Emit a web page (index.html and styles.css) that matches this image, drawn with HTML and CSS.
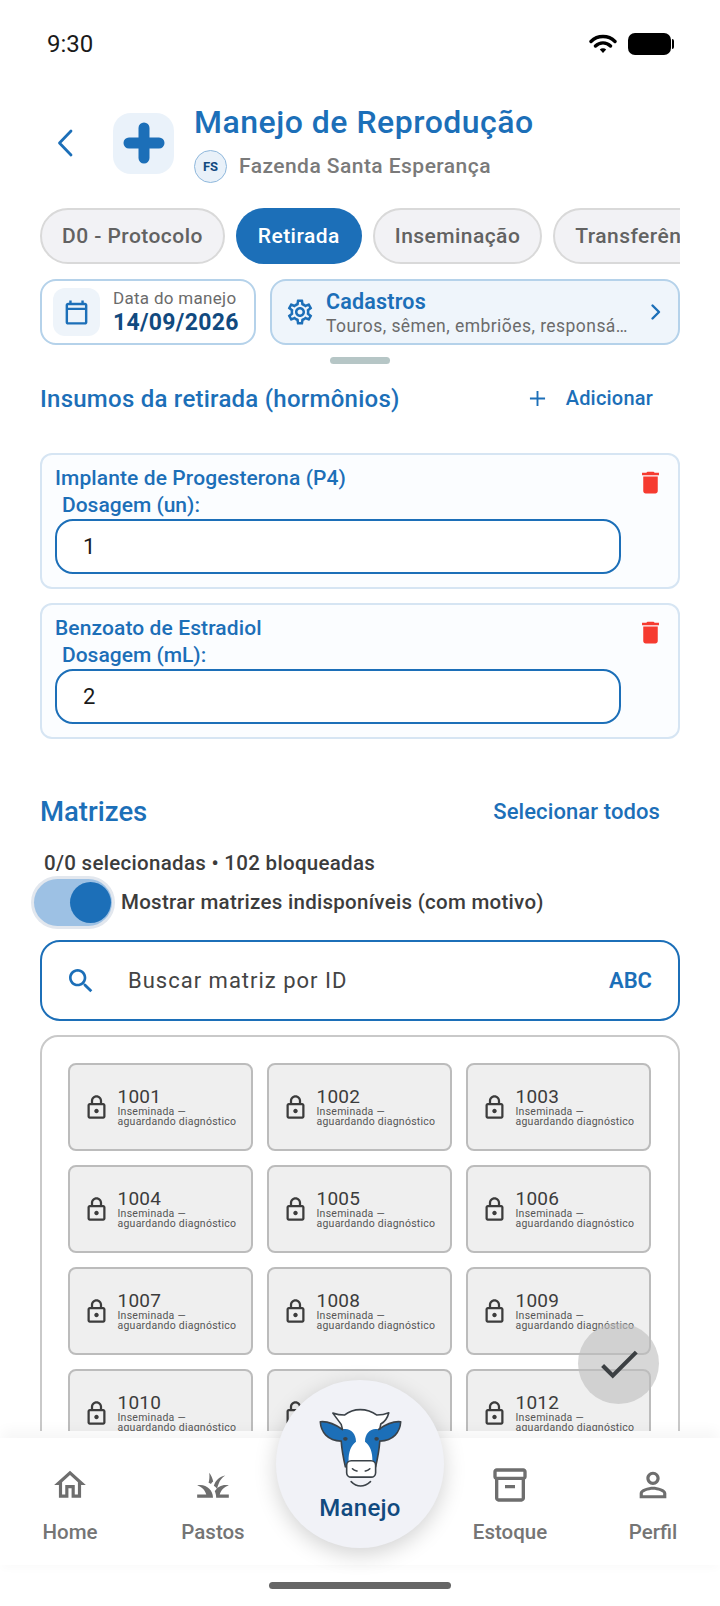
FILE: index.html
```html
<!DOCTYPE html>
<html lang="pt-BR">
  <head>
    <meta charset="UTF-8" />
    <meta name="viewport" content="width=device-width, initial-scale=1.0" />
    <title>Manejo de Reprodução</title>
    <link rel="stylesheet" href="styles.css">
  </head>
  <body>
    <div class="screen">
      <div class="status-bar">
        <span class="time">9:30</span>
        <div class="status-icons">
          <svg class="wifi" viewBox="0 0 28 20"><path d="M2 7.500a17 17 0 0 1 24 0M6.500 12a10.600 10.600 0 0 1 15 0" fill="none" stroke="#000" stroke-width="3.400" stroke-linecap="round"/><path d="M10.800 15.600a4.600 4.600 0 0 1 6.400 0L14 19z" fill="#000"/></svg>
          <div class="battery"></div>
        </div>
      </div>

      <div class="content">
        <div class="header">
          <svg class="back" viewBox="0 0 16 28"><path d="M14 2 2.500 14 14 26" fill="none" stroke="#1c6fb8" stroke-width="2.800" stroke-linecap="round" stroke-linejoin="round"/></svg>
          <div class="header-tile">
            <svg viewBox="0 0 42 42" class="plus"><path d="M21 6v30M6 21h30" fill="none" stroke="#1c6fb8" stroke-width="11" stroke-linecap="round"/></svg>
          </div>
          <div class="header-text">
            <h1>Manejo de Reprodução</h1>
            <div class="farm">
              <span class="farm-badge">FS</span>
              <span class="farm-name">Fazenda Santa Esperança</span>
            </div>
          </div>
        </div>

        <div class="chips">
          <span class="chip">D0 - Protocolo</span>
          <span class="chip active">Retirada</span>
          <span class="chip">Inseminação</span>
          <span class="chip">Transferência</span>
        </div>

        <div class="info-row">
          <div class="date-card">
            <div class="date-tile">
              <svg viewBox="0 0 24 24"><path d="M19 4h-1V2h-2v2H8V2H6v2H5c-1.100 0-2 .9-2 2v14c0 1.100.9 2 2 2h14c1.100 0 2-.9 2-2V6c0-1.100-.9-2-2-2zm0 16H5V10h14v10zm0-12H5V6h14v2z"/></svg>
            </div>
            <div>
              <div class="date-label">Data do manejo</div>
              <div class="date-value">14/09/2026</div>
            </div>
          </div>
          <div class="cad-card">
            <svg class="gear" viewBox="0 0 24 24"><path d="M19.430 12.980c.04-.32.07-.64.07-.98 0-.34-.03-.66-.07-.98l2.110-1.650c.19-.15.24-.42.12-.64l-2-3.460c-.09-.16-.26-.25-.44-.25-.06 0-.12.01-.17.03l-2.490 1c-.52-.4-1.080-.73-1.690-.98l-.38-2.650C14.460 2.180 14.250 2 14 2h-4c-.25 0-.46.18-.49.42l-.38 2.650c-.61.25-1.170.59-1.690.98l-2.490-1c-.06-.02-.12-.03-.18-.03-.17 0-.34.09-.43.25l-2 3.460c-.13.22-.07.49.12.64l2.110 1.650c-.04.32-.07.65-.07.98 0 .33.03.66.07.98l-2.110 1.650c-.19.15-.24.42-.12.64l2 3.460c.09.16.26.25.44.25.06 0 .12-.01.17-.03l2.490-1c.52.4 1.080.73 1.690.98l.38 2.650c.03.24.24.42.49.42h4c.25 0 .46-.18.49-.42l.38-2.650c.61-.25 1.170-.59 1.690-.98l2.490 1c.06.02.12.03.18.03.17 0 .34-.09.43-.25l2-3.460c.12-.22.07-.49-.12-.64l-2.110-1.650zm-1.980-1.710c.04.31.05.52.05.73 0 .21-.02.43-.05.73l-.14 1.130.89.7 1.080.84-.7 1.210-1.270-.51-1.040-.42-.9.68c-.43.32-.84.56-1.250.73l-1.060.43-.16 1.130-.2 1.350h-1.400l-.19-1.350-.16-1.130-1.060-.43c-.43-.18-.83-.41-1.230-.71l-.91-.7-1.060.43-1.270.51-.7-1.210 1.080-.84.89-.7-.14-1.130c-.03-.31-.05-.54-.05-.74s.02-.43.05-.73l.14-1.130-.89-.7-1.080-.84.7-1.210 1.270.51 1.040.42.9-.68c.43-.32.84-.56 1.250-.73l1.060-.43.16-1.130.2-1.350h1.390l.19 1.350.16 1.130 1.060.43c.43.18.83.41 1.230.71l.91.7 1.060-.43 1.270-.51.7 1.210-1.070.85-.89.7.14 1.130zM12 8c-2.210 0-4 1.790-4 4s1.790 4 4 4 4-1.790 4-4-1.790-4-4-4zm0 6c-1.100 0-2-.9-2-2s.9-2 2-2 2 .9 2 2-.9 2-2 2z"/></svg>
            <div class="cad-text">
              <div class="cad-title">Cadastros</div>
              <div class="cad-sub">Touros, sêmen, embriões, responsáveis</div>
            </div>
            <svg class="cad-arrow" viewBox="0 0 12 18"><path d="M2.500 2.500 9 9l-6.500 6.500" fill="none" stroke="#1c6fb8" stroke-width="2.400" stroke-linecap="round" stroke-linejoin="round"/></svg>
          </div>
        </div>

        <div class="handle"></div>

        <div class="section-head insumos-head">
          <h2 class="section-title">Insumos da retirada (hormônios)</h2>
          <div class="add-btn">
            <svg viewBox="0 0 18 18"><path d="M9 1v16M1 9h16" fill="none" stroke="#1c6fb8" stroke-width="2"/></svg>
            <span>Adicionar</span>
          </div>
        </div>

        <div class="dose-card first">
          <div class="dose-body">
            <div class="dose-name">Implante de Progesterona (P4)</div>
            <label class="dose-label">Dosagem (un):</label>
            <div class="dose-input">1</div>
          </div>
          <svg class="trash" viewBox="0 0 24 24"><path d="M6 19c0 1.100.9 2 2 2h8c1.100 0 2-.9 2-2V7H6v12zM19 4h-3.500l-1-1h-5l-1 1H5v2h14V4z"/></svg>
        </div>

        <div class="dose-card">
          <div class="dose-body">
            <div class="dose-name">Benzoato de Estradiol</div>
            <label class="dose-label">Dosagem (mL):</label>
            <div class="dose-input">2</div>
          </div>
          <svg class="trash" viewBox="0 0 24 24"><path d="M6 19c0 1.100.9 2 2 2h8c1.100 0 2-.9 2-2V7H6v12zM19 4h-3.500l-1-1h-5l-1 1H5v2h14V4z"/></svg>
        </div>

        <div class="section-head matrizes-head">
          <h2 class="matrizes-title">Matrizes</h2>
          <span class="select-all">Selecionar todos</span>
        </div>

        <div class="count">0/0 selecionadas • 102 bloqueadas</div>

        <div class="toggle-row">
          <div class="switch"><div class="knob"></div></div>
          <span class="toggle-text">Mostrar matrizes indisponíveis (com motivo)</span>
        </div>

        <div class="search">
          <svg viewBox="0 0 24 24"><path d="M15.500 14h-.79l-.28-.27C15.410 12.590 16 11.110 16 9.500 16 5.910 13.090 3 9.500 3S3 5.910 3 9.500 5.910 16 9.500 16c1.610 0 3.090-.59 4.230-1.570l.27.28v.79l5 4.990L20.490 19l-4.990-5zm-6 0C7.010 14 5 11.990 5 9.500S7.010 5 9.500 5 14 7.010 14 9.500 11.990 14 9.500 14z"/></svg>
          <span class="search-text">Buscar matriz por ID</span>
          <span class="search-mode">ABC</span>
        </div>

        <div class="matrix-list">
          <div class="matrix-grid">
            <div class="tile"><svg viewBox="0 0 24 24"><use href="#lock"/></svg><div><div class="tile-id">1001</div><div class="tile-sub">Inseminada —<br>aguardando diagnóstico</div></div></div>
            <div class="tile"><svg viewBox="0 0 24 24"><use href="#lock"/></svg><div><div class="tile-id">1002</div><div class="tile-sub">Inseminada —<br>aguardando diagnóstico</div></div></div>
            <div class="tile"><svg viewBox="0 0 24 24"><use href="#lock"/></svg><div><div class="tile-id">1003</div><div class="tile-sub">Inseminada —<br>aguardando diagnóstico</div></div></div>
            <div class="tile"><svg viewBox="0 0 24 24"><use href="#lock"/></svg><div><div class="tile-id">1004</div><div class="tile-sub">Inseminada —<br>aguardando diagnóstico</div></div></div>
            <div class="tile"><svg viewBox="0 0 24 24"><use href="#lock"/></svg><div><div class="tile-id">1005</div><div class="tile-sub">Inseminada —<br>aguardando diagnóstico</div></div></div>
            <div class="tile"><svg viewBox="0 0 24 24"><use href="#lock"/></svg><div><div class="tile-id">1006</div><div class="tile-sub">Inseminada —<br>aguardando diagnóstico</div></div></div>
            <div class="tile"><svg viewBox="0 0 24 24"><use href="#lock"/></svg><div><div class="tile-id">1007</div><div class="tile-sub">Inseminada —<br>aguardando diagnóstico</div></div></div>
            <div class="tile"><svg viewBox="0 0 24 24"><use href="#lock"/></svg><div><div class="tile-id">1008</div><div class="tile-sub">Inseminada —<br>aguardando diagnóstico</div></div></div>
            <div class="tile"><svg viewBox="0 0 24 24"><use href="#lock"/></svg><div><div class="tile-id">1009</div><div class="tile-sub">Inseminada —<br>aguardando diagnóstico</div></div></div>
            <div class="tile"><svg viewBox="0 0 24 24"><use href="#lock"/></svg><div><div class="tile-id">1010</div><div class="tile-sub">Inseminada —<br>aguardando diagnóstico</div></div></div>
            <div class="tile"><svg viewBox="0 0 24 24"><use href="#lock"/></svg><div><div class="tile-id">1011</div><div class="tile-sub">Inseminada —<br>aguardando diagnóstico</div></div></div>
            <div class="tile"><svg viewBox="0 0 24 24"><use href="#lock"/></svg><div><div class="tile-id">1012</div><div class="tile-sub">Inseminada —<br>aguardando diagnóstico</div></div></div>
          </div>
        </div>
      </div>

      <div class="fab">
        <svg viewBox="0 0 24 24"><path d="M9 16.170 4.830 12l-1.420 1.410L9 19 21 7l-1.410-1.410z"/></svg>
      </div>

      <div class="nav">
        <div class="nav-item">
          <div class="nav-icon"><svg class="ic38" viewBox="0 0 24 24"><path d="M12 5.690l5 4.500V18h-2v-6H9v6H7v-7.810l5-4.500M12 3L2 12h3v8h6v-6h2v6h6v-8h3L12 3z"/></svg></div>
          <span>Home</span>
        </div>
        <div class="nav-item">
          <div class="nav-icon"><svg class="ic38" viewBox="0 0 24 24"><path d="M12 20H2v-2h5.750C7.020 15.190 4.810 12.990 2 12.260 2.640 12.100 3.310 12 4 12c4.420 0 8 3.580 8 8zM22 12.260C21.360 12.100 20.690 12 20 12c-2.930 0-5.480 1.580-6.880 3.930.29.66.53 1.350.67 2.070.13.65.2 1.320.2 2h8v-2h-5.750c.74-2.810 2.950-5.010 5.760-5.740zM15.640 11.020c.78-2.090 2.230-3.840 4.090-5-3.500.6-6.300 3.200-7.200 6.500.7.500 1.400 1.100 2 1.800.3-1.100.7-2.300 1.110-3.300zM12.100 9.800C11.800 7.900 10.900 5.700 9.600 4.200c.3 2.200.2 4.300-.4 6.400.5.200 1 .4 1.500.7.400-.6.900-1.100 1.400-1.500z"/></svg></div>
          <span>Pastos</span>
        </div>
        <div></div>
        <div class="nav-item">
          <div class="nav-icon"><svg class="ic40" viewBox="0 0 24 24"><path d="M20 2H4c-1 0-2 .9-2 2v3.010c0 .72.43 1.340 1 1.690V20c0 1.100 1.100 2 2 2h14c.9 0 2-.9 2-2V8.700c.57-.35 1-.97 1-1.690V4c0-1.100-1-2-2-2zm-1 18H5V9h14v11zm1-13H4V4h16v3zM9 12h6v2H9z"/></svg></div>
          <span>Estoque</span>
        </div>
        <div class="nav-item">
          <div class="nav-icon"><svg class="ic40" viewBox="0 0 24 24"><path d="M12 5.900c1.160 0 2.100.94 2.100 2.100s-.94 2.100-2.100 2.100S9.900 9.160 9.900 8s.94-2.100 2.100-2.100m0 9c2.970 0 6.100 1.460 6.100 2.100v1.100H5.900V17c0-.64 3.130-2.100 6.100-2.100M12 4C9.790 4 8 5.790 8 8s1.790 4 4 4 4-1.790 4-4-1.790-4-4-4zm0 9c-2.670 0-8 1.340-8 4v3h16v-3c0-2.660-5.330-4-8-4z"/></svg></div>
          <span>Perfil</span>
        </div>
      </div>

      <div class="manejo-btn">
        <svg class="cow" viewBox="80 104 264 258">
          <path d="M152 158 126 123c12 4 24 6 36 6 14-11 30-17 49-17 21 0 37 6 52 17 12 0 25-2 37-7-4 16-12 28-25 35l-1 42-14 82H166l-14-82z" fill="#fff"/>
          <path d="M156 174C128 154 105 148 87 150c2 32 22 58 65 60 2 28 7 54 13 80l10-16c-1-32 8-50 23-62 0-28-20-44-42-38z" fill="#1c6fb8"/>
          <path d="M268 174c28-20 51-26 69-24-2 32-22 58-65 60-2 28-7 54-13 80l-10-16c1-32-8-50-23-62 0-28 20-44 42-38z" fill="#1c6fb8"/>
          <g fill="none" stroke="#3b4248" stroke-width="5" stroke-linejoin="round" stroke-linecap="round">
            <path d="M156 174C128 154 105 148 87 150c2 32 22 58 65 60 2 28 7 54 13 80"/>
            <path d="M268 174c28-20 51-26 69-24-2 32-22 58-65 60-2 28-7 54-13 80"/>
            <path d="M156 174l-4-16-26-35c12 4 24 6 36 6 14-11 30-17 49-17 21 0 37 6 52 17 12 0 25-2 37-7-4 16-12 28-25 35l-3 16"/>
          </g>
          <ellipse cx="165" cy="203" rx="7" ry="6" fill="#3b4248"/>
          <ellipse cx="262" cy="203" rx="7" ry="6" fill="#3b4248"/>
          <rect x="169" y="271" width="90" height="51" rx="14" fill="#fff" stroke="#3b4248" stroke-width="5"/>
          <path d="M187 296c5 5 10 6 14 7M241 296c-5 5-10 6-14 7M183 336c18 18 40 18 60 0" fill="none" stroke="#3b4248" stroke-width="5" stroke-linecap="round"/>
        </svg>
        <span>Manejo</span>
      </div>

      <div class="home-bar"></div>
    </div>

    <svg class="defs" width="0" height="0">
      <symbol id="lock" viewBox="0 0 24 24"><path d="M18 8h-1V6c0-2.760-2.240-5-5-5S7 3.240 7 6v2H6c-1.100 0-2 .9-2 2v10c0 1.100.9 2 2 2h12c1.100 0 2-.9 2-2V10c0-1.100-.9-2-2-2zM9 6c0-1.660 1.340-3 3-3s3 1.340 3 3v2H9V6zm9 14H6V10h12v10zm-6-3c1.100 0 2-.9 2-2s-.9-2-2-2-2 .9-2 2 .9 2 2 2z"/></symbol>
    </svg>
  </body>
</html>
```
FILE: styles.css
```css
body {
  margin: 0;
  background-color: #ffffff;
  font-family: Roboto, "Noto Sans", sans-serif;
}
.screen {
  position: relative;
  display: flex;
  flex-direction: column;
  width: 720px;
  height: 1606px;
  overflow: hidden;
  background-color: #ffffff;
}
.defs {
  position: absolute;
}

/* status bar */
.status-bar {
  display: flex;
  justify-content: space-between;
  align-items: flex-start;
  height: 100px;
  padding: 30px 47px 0 47px;
  box-sizing: border-box;
  flex-shrink: 0;
}
.time {
  font-size: 24px;
  line-height: 28px;
  color: #1a1a1a;
}
.status-icons {
  display: flex;
  align-items: center;
  gap: 11px;
  margin-top: 3px;
}
.wifi {
  width: 28px;
  height: 20px;
}
.battery {
  position: relative;
  width: 43px;
  height: 22px;
  margin-right: 2px;
  background-color: #000000;
  border-radius: 7px;
}
.battery::after {
  content: "";
  position: absolute;
  right: -3px;
  top: 6px;
  width: 2px;
  height: 10px;
  background-color: #000000;
  border-radius: 0 2px 2px 0;
}

/* scrolling part */
.content {
  flex: 1;
  min-height: 0;
  overflow: hidden;
  padding: 0 40px;
}
.header {
  display: flex;
  align-items: center;
  height: 86px;
  margin-bottom: 22px;
}
.back {
  width: 16px;
  height: 28px;
  margin-left: 17px;
}
.header-tile {
  display: flex;
  justify-content: center;
  align-items: center;
  width: 61px;
  height: 61px;
  margin-left: 40px;
  background-color: #eaf2fa;
  border-radius: 18px;
}
.plus {
  width: 42px;
  height: 42px;
}
.header-text {
  margin-left: 20px;
}
h1 {
  margin: 0;
  height: 46px;
  font-size: 32px;
  line-height: 36px;
  font-weight: 500;
  letter-spacing: 0.5px;
  color: #1c6fb8;
}
.farm {
  display: flex;
  align-items: center;
  gap: 12px;
}
.farm-badge {
  display: flex;
  justify-content: center;
  align-items: center;
  width: 33px;
  height: 33px;
  box-sizing: border-box;
  background-color: #e9f1f9;
  border: 1.500px solid #8fb8dc;
  border-radius: 50%;
  font-size: 13px;
  font-weight: 700;
  color: #114a7f;
}
.farm-name {
  font-size: 21px;
  font-weight: 500;
  letter-spacing: 0.45px;
  color: #7a7a7a;
}

/* tabs */
.chips {
  display: flex;
  gap: 11px;
  overflow: hidden;
  height: 56px;
}
.chip {
  display: flex;
  align-items: center;
  flex-shrink: 0;
  height: 56px;
  box-sizing: border-box;
  padding: 0 20px;
  background-color: #f2f2f5;
  border: 2px solid #d9d9d9;
  border-radius: 28px;
  font-size: 21px;
  font-weight: 500;
  letter-spacing: 0.45px;
  color: #626262;
}
.chip.active {
  padding: 0 22px;
  background-color: #1c6fb8;
  border: none;
  color: #ffffff;
}

/* date + cadastros */
.info-row {
  display: flex;
  gap: 14px;
  margin-top: 15px;
}
.date-card {
  display: flex;
  align-items: center;
  gap: 13px;
  width: 216px;
  height: 66px;
  box-sizing: border-box;
  padding-left: 11px;
  background-color: #ffffff;
  border: 2px solid #b5d2ea;
  border-radius: 16px;
}
.date-tile {
  display: flex;
  justify-content: center;
  align-items: center;
  width: 47px;
  height: 48px;
  background-color: #eef4fa;
  border-radius: 12px;
}
.date-tile svg {
  width: 29px;
  height: 29px;
  fill: #1c6fb8;
}
.date-label {
  font-size: 17px;
  line-height: 22px;
  letter-spacing: 0.3px;
  color: #6b6b6b;
}
.date-value {
  font-size: 23px;
  line-height: 28px;
  font-weight: 700;
  letter-spacing: 0.3px;
  color: #114a7f;
}
.cad-card {
  display: flex;
  align-items: center;
  flex: 1;
  min-width: 0;
  height: 66px;
  box-sizing: border-box;
  padding: 0 16px 0 13px;
  background-color: #eff5fb;
  border: 2px solid #b5d2ea;
  border-radius: 16px;
}
.gear {
  width: 30px;
  height: 30px;
  flex-shrink: 0;
  fill: #1c6fb8;
}
.cad-text {
  flex: 1;
  min-width: 0;
  margin-left: 11px;
  padding-top: 2px;
}
.cad-title {
  font-size: 21.500px;
  line-height: 26px;
  font-weight: 600;
  letter-spacing: 0.2px;
  color: #1c6fb8;
}
.cad-sub {
  font-size: 17.500px;
  line-height: 22px;
  letter-spacing: 0.45px;
  color: #6b6b6b;
  white-space: nowrap;
  overflow: hidden;
  text-overflow: ellipsis;
}
.cad-arrow {
  width: 12px;
  height: 18px;
  flex-shrink: 0;
  margin-left: 14px;
}
.handle {
  width: 60px;
  height: 7px;
  margin: 12px auto 0;
  background-color: #b6c6c6;
  border-radius: 4px;
}

/* insumos */
.section-head {
  display: flex;
  justify-content: space-between;
  align-items: center;
  height: 40px;
}
.insumos-head {
  margin-top: 14px;
}
.section-title {
  margin: 0;
  padding-top: 2px;
  font-size: 24px;
  font-weight: 500;
  letter-spacing: 0.25px;
  color: #1c6fb8;
}
.add-btn {
  display: flex;
  align-items: center;
  gap: 20px;
  padding-right: 27px;
  font-size: 20px;
  font-weight: 500;
  letter-spacing: 0.2px;
  color: #1c6fb8;
}
.add-btn svg {
  width: 17px;
  height: 17px;
}
.dose-card {
  display: flex;
  align-items: flex-start;
  height: 136px;
  box-sizing: border-box;
  margin-top: 14px;
  padding: 10px 13px 0 13px;
  background-color: #fbfdff;
  border: 2px solid #d6e5f3;
  border-radius: 12px;
}
.dose-card.first {
  margin-top: 35px;
}
.dose-body {
  width: 566px;
}
.dose-name {
  font-size: 21px;
  line-height: 26px;
  font-weight: 500;
  letter-spacing: 0.1px;
  color: #1c6fb8;
}
.dose-label {
  display: block;
  margin: 1px 0 1px 7px;
  font-size: 21px;
  line-height: 26px;
  font-weight: 500;
  color: #1c6fb8;
}
.dose-input {
  display: flex;
  align-items: center;
  height: 55px;
  box-sizing: border-box;
  padding-left: 26px;
  background-color: #ffffff;
  border: 2px solid #1c6fb8;
  border-radius: 18px;
  font-size: 22px;
  color: #1a1a1a;
}
.trash {
  width: 29px;
  height: 29px;
  margin: 3px 0 0 15px;
  fill: #f63b30;
}

/* matrizes */
.matrizes-head {
  margin-top: 52px;
}
.matrizes-title {
  margin: 0;
  font-size: 27.500px;
  font-weight: 500;
  color: #1c6fb8;
}
.select-all {
  padding-right: 20px;
  font-size: 22px;
  font-weight: 500;
  letter-spacing: 0.1px;
  color: #1c6fb8;
}
.count {
  margin: 20px 0 0 4px;
  font-size: 20.500px;
  line-height: 24px;
  font-weight: 500;
  letter-spacing: 0.3px;
  color: #3c3c3c;
}
.toggle-row {
  display: flex;
  align-items: center;
  gap: 9px;
  height: 48px;
  margin: 3px 0 0 -6px;
}
.switch {
  display: flex;
  justify-content: flex-end;
  align-items: center;
  width: 78px;
  height: 47px;
  box-sizing: border-box;
  padding-right: 1px;
  background-color: #9dc1e4;
  border-radius: 24px;
  box-shadow: 0 0 0 3px #e2e7ee;
}
.knob {
  width: 41px;
  height: 41px;
  background-color: #1c6fb8;
  border-radius: 50%;
}
.toggle-text {
  font-size: 20.500px;
  font-weight: 500;
  letter-spacing: 0.28px;
  color: #3c3c3c;
}
.search {
  display: flex;
  align-items: center;
  height: 81px;
  box-sizing: border-box;
  margin-top: 14px;
  padding: 0 26px 0 23px;
  background-color: #ffffff;
  border: 2px solid #1c6fb8;
  border-radius: 20px;
}
.search svg {
  width: 32px;
  height: 32px;
  fill: #1c6fb8;
}
.search-text {
  flex: 1;
  margin-left: 31px;
  font-size: 22px;
  letter-spacing: 1px;
  color: #444444;
}
.search-mode {
  font-size: 22px;
  font-weight: 600;
  color: #1c6fb8;
}
.matrix-list {
  margin-top: 14px;
  padding: 26px 27px 40px 26px;
  border: 2px solid #c9c9c9;
  border-radius: 18px;
}
.matrix-grid {
  display: grid;
  grid-template-columns: repeat(3, 185px);
  gap: 14px 14px;
}
.tile {
  display: flex;
  align-items: center;
  gap: 7.500px;
  height: 88px;
  box-sizing: border-box;
  padding-left: 13px;
  background-color: #efefef;
  border: 2px solid #bcbcbc;
  border-radius: 8px;
}
.tile svg {
  width: 27px;
  height: 27px;
  flex-shrink: 0;
  fill: #3c3c3c;
}
.tile-id {
  font-size: 19px;
  line-height: 20px;
  letter-spacing: 0.2px;
  color: #3c3c3c;
}
.tile-sub {
  font-size: 10.500px;
  line-height: 10px;
  letter-spacing: 0.25px;
  color: #555555;
}

/* overlays */
.fab {
  position: absolute;
  left: 578px;
  top: 1323px;
  display: flex;
  justify-content: center;
  align-items: center;
  width: 81px;
  height: 81px;
  background-color: rgba(190, 190, 190, 0.62);
  border-radius: 50%;
}
.fab svg {
  width: 50px;
  height: 50px;
  fill: #3c4043;
}
.nav {
  display: grid;
  grid-template-columns: 140px 146px 148px 152px 134px;
  height: 127px;
  box-sizing: border-box;
  padding-top: 28px;
  flex-shrink: 0;
  margin: 7px 0 41px;
  background-color: #ffffff;
  box-shadow: 0 -10px 12px -2px rgba(0, 0, 0, 0.035), 0 6px 8px -2px rgba(0, 0, 0, 0.02);
}
.nav-item {
  display: flex;
  flex-direction: column;
  align-items: center;
  font-size: 20.500px;
  line-height: 28px;
  font-weight: 500;
  color: #757575;
}
.nav-icon {
  display: flex;
  justify-content: center;
  align-items: center;
  height: 38px;
  margin-bottom: 14px;
}
.ic38 {
  width: 38px;
  height: 38px;
  fill: #6e6e6e;
}
.ic40 {
  width: 40px;
  height: 40px;
  fill: #6e6e6e;
}
.manejo-btn {
  position: absolute;
  left: 276px;
  top: 1380px;
  display: flex;
  flex-direction: column;
  align-items: center;
  width: 168px;
  height: 168px;
  box-sizing: border-box;
  padding-top: 27px;
  background-color: #f1f2f7;
  border-radius: 50%;
  box-shadow: 0 6px 22px rgba(0, 0, 0, 0.18);
  font-size: 24px;
  line-height: 30px;
  font-weight: 500;
  letter-spacing: 0.3px;
  color: #114a7f;
}
.cow {
  width: 85px;
  height: 83px;
  margin-bottom: 3px;
}
.home-bar {
  position: absolute;
  left: 269px;
  top: 1582px;
  width: 182px;
  height: 7px;
  background-color: #666666;
  border-radius: 4px;
}
```
